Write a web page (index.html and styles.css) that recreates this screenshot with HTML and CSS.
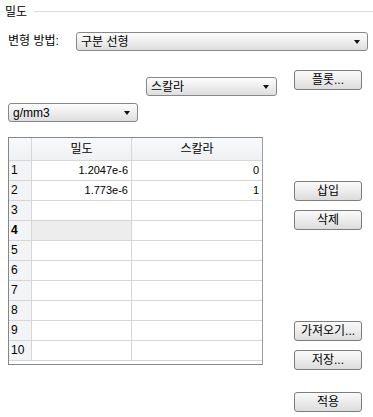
FILE: index.html
```html
<!DOCTYPE html>
<html lang="ko">
<head>
    <meta charset="UTF-8">
    <title>밀도</title>
    <link rel="stylesheet" href="styles.css">
</head>
<body>
    <div class="group-title"><span>밀도</span></div>

    <div class="row method">
        <span class="label">변형 방법:</span>
        <div class="combo wide"><span>구분 선형</span><i class="arrow"></i></div>
    </div>

    <div class="row scalar">
        <div class="combo scalar-combo"><span>스칼라</span><i class="arrow"></i></div>
        <button class="btn plot">플롯...</button>
    </div>

    <div class="row unit">
        <div class="combo unit-combo"><span>g/mm3</span><i class="arrow"></i></div>
    </div>

    <div class="main">
        <div class="grid-box">
            <table class="grid">
                <tr><th class="corner"></th><th class="c1">밀도</th><th class="c2">스칼라</th></tr>
                <tr><td class="rh">1</td><td class="num">1.2047e-6</td><td class="num">0</td></tr>
                <tr><td class="rh">2</td><td class="num">1.773e-6</td><td class="num">1</td></tr>
                <tr><td class="rh">3</td><td></td><td></td></tr>
                <tr class="current"><td class="rh">4</td><td class="sel"></td><td></td></tr>
                <tr><td class="rh">5</td><td></td><td></td></tr>
                <tr><td class="rh">6</td><td></td><td></td></tr>
                <tr><td class="rh">7</td><td></td><td></td></tr>
                <tr><td class="rh">8</td><td></td><td></td></tr>
                <tr><td class="rh">9</td><td></td><td></td></tr>
                <tr><td class="rh">10</td><td></td><td></td></tr>
            </table>
        </div>
        <div class="side">
            <button class="btn insert">삽입</button>
            <button class="btn delete">삭제</button>
            <button class="btn import">가져오기...</button>
            <button class="btn save">저장...</button>
            <button class="btn apply">적용</button>
        </div>
    </div>
</body>
</html>
```

FILE: styles.css
```css
body { margin: 0; width: 373px; height: 417px; background: #fff; color: #000;
       font-family: "Liberation Sans", "Noto Sans CJK KR", sans-serif; font-size: 12px; }

.group-title { display: flex; align-items: center; height: 20px; padding-top: 3px; box-sizing: border-box; }
.group-title::before { content: ""; width: 4px; border-top: 1px solid #e6ebee; margin-right: 1px; }
.group-title span { line-height: 14px; }
.group-title::after { content: ""; flex: 1; border-top: 1px solid #d5dde3; margin-left: 7px; }

.row { display: flex; align-items: flex-start; }
.method { margin-top: 12px; padding-left: 8px; align-items: center; }
.method .label { width: 68px; line-height: 19px; }
.scalar { margin-top: 19px; height: 33px; }
.unit { padding-left: 8px; }

.combo { display: flex; align-items: center; justify-content: space-between; box-sizing: border-box;
         height: 19px; border: 1px solid #878787; border-radius: 3px; padding: 0 7px 0 4px;
         background: linear-gradient(#fdfdfd, #ececec 55%, #dedede); line-height: 16px; }
.combo .arrow { width: 0; height: 0; border-top: 4px solid #111;
                border-left: 3.5px solid transparent; border-right: 3.5px solid transparent; }
.wide { width: 292px; }
.scalar-combo { width: 131px; margin-left: 146px; margin-top: 7px; }
.plot { margin-left: 17px; }
.unit-combo { width: 130px; }

.btn { display: block; box-sizing: border-box; width: 68px; height: 20px; padding: 0;
       border: 1px solid #7d7d7d; border-radius: 3px; font: inherit; line-height: 16px; color: #000;
       background: linear-gradient(#fafafa, #ececec 50%, #dcdcdc); }

.main { display: flex; margin-top: 15px; padding-left: 8px; }
.grid-box { width: 255px; height: 228px; box-sizing: border-box; border: 1px solid #82868d; border-right-color: #9a9ea5; }
.grid { border-collapse: collapse; table-layout: fixed; width: 253px; }
.grid th, .grid td { padding: 0; border: 1px solid #d6d6d6; height: 19px; line-height: 19px; }
.grid tr:first-child th { border-top: none; height: 22px;
                          background: linear-gradient(#f8f9fa, #eef0f2); font-weight: normal; }
.grid tr > :first-child { border-left: none; }
.grid tr > :last-child { border-right: none; }
.corner { width: 22px; }
.c1 { width: 99px; }
.grid .rh { background: #f3f4f6; font-size: 12px; padding-left: 2px; text-align: left; }
.grid .num { text-align: right; padding-right: 3px; font-size: 11px; }
.current .rh { font-weight: bold; }
.grid .sel { background: #ededed; }

.side { display: flex; flex-direction: column; margin-left: 31px; padding-top: 44px; }
.delete { margin-top: 9px; }
.import { margin-top: 91px; }
.save { margin-top: 9px; }
.apply { margin-top: 22px; }
```
